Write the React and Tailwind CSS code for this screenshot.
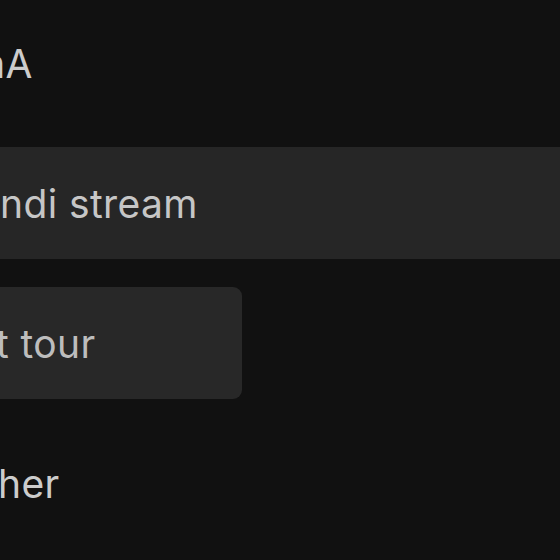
import React from "react";

const rows = [
  { label: "mA", shift: "-ml-[29px]", bg: "", color: "text-[#cccccc]" },
  { label: "ndi stream", shift: "ml-0", bg: "bg-[#262626] w-[620px]", color: "text-[#c6c6c6]" },
  { label: "t tour", shift: "-ml-[4px]", bg: "bg-[#282828] w-[262px] rounded-[9px]", color: "text-[#bdbdbd]" },
  { label: "her", shift: "-ml-[2px]", bg: "", color: "text-[#cccccc]" },
];

export default function App() {
  return (
    <div
      className="w-[560px] h-[560px] overflow-hidden bg-[#111111]"
      style={{ fontFamily: "Inter, 'Noto Sans', sans-serif" }}
    >
      <div className="flex flex-col gap-[28px] pt-[7px] -ml-[20px]">
        {rows.map((r) => (
          <div key={r.label} className={`h-[112px] flex items-center pl-[20px] ${r.bg}`}>
            <span className={`text-[39px] leading-none tracking-[0.4px] ${r.color} ${r.shift}`}>
              {r.label}
            </span>
          </div>
        ))}
      </div>
    </div>
  );
}
